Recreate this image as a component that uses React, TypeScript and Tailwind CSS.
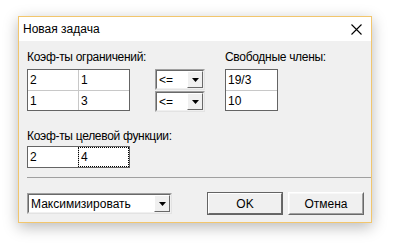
const font = { fontFamily: '"Liberation Sans", Arial, sans-serif' };

function Grid({ rows, width, focus }: { rows: string[][]; width: string; focus?: [number, number] }) {
  return (
    <div className={`flex flex-col border border-[#646464] bg-white ${width}`}>
      {rows.map((row, ri) => (
        <div key={ri} className={`flex h-[20px] ${ri > 0 ? "border-t border-[#c8c8c8]" : ""}`}>
          {row.map((cell, ci) => {
            const isFocus = focus && focus[0] === ri && focus[1] === ci;
            return (
              <div
                key={ci}
                className={`flex-1 flex items-center pl-[2px] text-[12px] text-black ${ci > 0 ? "border-l border-[#c8c8c8]" : ""} ${
                  isFocus ? "outline outline-1 outline-dotted outline-black -outline-offset-1" : ""
                }`}
              >
                {cell}
              </div>
            );
          })}
        </div>
      ))}
    </div>
  );
}

function Arrow() {
  return (
    <div className="w-[16px] h-full bg-[#f0f0f0] border-t border-l border-t-white border-l-white border-b border-r border-b-[#696969] border-r-[#696969] flex items-center justify-center">
      <svg width="7" height="4" viewBox="0 0 7 4">
        <path d="M0 0h7L3.5 4z" fill="#000" />
      </svg>
    </div>
  );
}

function Combo({ value, width }: { value: string; width: string }) {
  return (
    <div className={`h-[21px] border border-t-[#a0a0a0] border-l-[#a0a0a0] border-b-[#e3e3e3] border-r-[#e3e3e3] ${width}`}>
      <div className="h-full flex bg-white border border-t-[#696969] border-l-[#696969] border-b-[#f0f0f0] border-r-[#f0f0f0]">
        <div className="flex-1 flex items-center pl-[2px] text-[12px] text-black">{value}</div>
        <Arrow />
      </div>
    </div>
  );
}

function Button({ label, primary }: { label: string; primary?: boolean }) {
  return (
    <div
      className={`w-[76px] h-[23px] ${
        primary ? "border border-[#646464]" : "border border-t-white border-l-white border-b-[#696969] border-r-[#696969]"
      }`}
    >
      <div
        className={`h-full flex items-center justify-center bg-[#f0f0f0] text-[12px] text-black border ${
          primary
            ? "border-t-white border-l-white border-b-[#696969] border-r-[#696969]"
            : "border-t-[#f8f8f8] border-l-[#f8f8f8] border-b-[#a0a0a0] border-r-[#a0a0a0]"
        }`}
      >
        {label}
      </div>
    </div>
  );
}

export default function App() {
  return (
    <div className="w-[401px] h-[251px] bg-white pl-[18px] pt-[16px]" style={font}>
      <div className="w-[354px] h-[207px] flex flex-col border border-[#f2c66d] bg-[#f0f0f0] shadow-[0_4px_14px_rgba(0,0,0,0.28)]">
        <div className="h-[24px] bg-white flex items-center justify-between pl-[4px] pr-[9px]">
          <span className="text-[12px] text-black">Новая задача</span>
          <svg width="11" height="11" viewBox="0 0 11 11">
            <path d="M0.5 0.5l10 10M10.5 0.5l-10 10" stroke="#000" strokeWidth="1.1" />
          </svg>
        </div>

        <div className="flex-1 flex flex-col pl-[8px] pt-[8px]">
          <div className="flex">
            <div className="w-[128px] shrink-0 flex flex-col gap-[4px]">
              <span className="text-[12px] leading-[16px] text-black whitespace-nowrap tracking-[-0.3px]">Коэф-ты ограничений:</span>
              <Grid rows={[["2", "1"], ["1", "3"]]} width="w-[103px]" />
            </div>
            <div className="w-[50px] shrink-0 flex flex-col gap-[1px] mt-[20px]">
              <Combo value="<=" width="w-[50px]" />
              <Combo value="<=" width="w-[50px]" />
            </div>
            <div className="flex flex-col gap-[4px] ml-[20px]">
              <span className="text-[12px] leading-[16px] text-black whitespace-nowrap tracking-[-0.3px]">Свободные члены:</span>
              <Grid rows={[["19/3"], ["10"]]} width="w-[53px]" />
            </div>
          </div>

          <div className="flex flex-col gap-[2px] mt-[16px]">
            <span className="text-[12px] leading-[16px] text-black tracking-[-0.3px]">Коэф-ты целевой функции:</span>
            <Grid rows={[["2", "4"]]} width="w-[103px]" focus={[0, 1]} />
          </div>

          <div className="mt-[9px] h-px bg-[#a0a0a0]" />

          <div className="flex items-center mt-[14px] pr-[7px]">
            <Combo value="Максимизировать" width="w-[145px]" />
            <div className="ml-auto flex gap-[5px]">
              <Button label="OK" primary />
              <Button label="Отмена" />
            </div>
          </div>
        </div>
      </div>
    </div>
  );
}
